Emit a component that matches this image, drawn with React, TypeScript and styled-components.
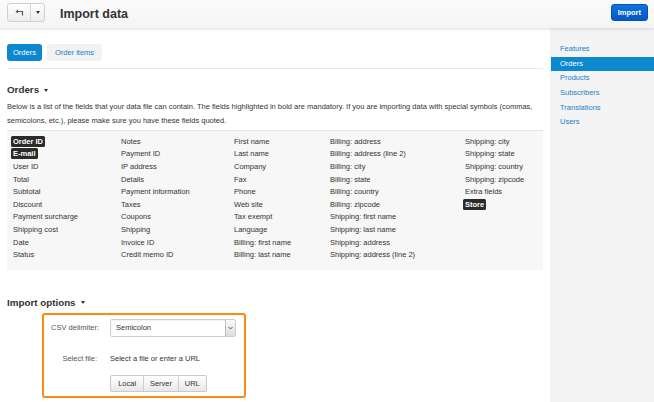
import React from "react";
import styled, { createGlobalStyle } from "styled-components";

const Global = createGlobalStyle`
  html, body { margin: 0; padding: 0; background: #fff; }
  body { font-family: "Liberation Sans", Arial, sans-serif; font-size: 7.5px; color: #333; }
  * { box-sizing: border-box; }
`;

const Page = styled.div`
  width: 654px;
  height: 402px;
  overflow: hidden;
  display: flex;
  flex-direction: column;
`;

const Header = styled.header`
  height: 28px;
  flex: none;
  display: flex;
  align-items: center;
  padding: 0 6px 0 7px;
  background: linear-gradient(#fbfbfb, #f4f4f4);
  box-shadow: 0 1px 3px rgba(0, 0, 0, 0.14);
  position: relative;
  z-index: 1;
`;

const BtnGroup = styled.div`
  display: flex;
  height: 19px;
  margin-top: -3px;
  border: 1px solid #cfcfcf;
  border-radius: 3px;
  background: linear-gradient(#ffffff, #ececec);
  overflow: hidden;
`;

const IconBtn = styled.div<{ $w: number }>`
  width: ${(p) => p.$w}px;
  display: flex;
  align-items: center;
  justify-content: center;
  & + & { border-left: 1px solid #d6d6d6; }
`;

const Title = styled.h1`
  margin: 0 0 0 15px;
  font-size: 12.5px;
  font-weight: bold;
  color: #333;
  flex: 1;
`;

const PrimaryBtn = styled.button`
  height: 17px;
  margin-top: -4px;
  padding: 0 6px;
  border: 1px solid #0a4fb8;
  border-radius: 3px;
  background: linear-gradient(#0d74dc, #0756c6);
  color: #fff;
  font-family: inherit;
  font-size: 7.5px;
  font-weight: bold;
`;

const Body = styled.div`
  flex: 1;
  display: flex;
  min-height: 0;
`;

const Main = styled.main`
  width: 550px;
  flex: none;
  padding: 0 7px;
`;

const Tabs = styled.div`
  display: flex;
  gap: 5px;
  margin-top: 16px;
  padding-bottom: 7px;
  border-bottom: 1px solid #e8e8e8;
`;

const Tab = styled.div<{ $active?: boolean }>`
  height: 17px;
  padding: 0 ${(p) => (p.$active ? 6 : 8)}px;
  display: flex;
  align-items: center;
  border-radius: 3px;
  background: ${(p) => (p.$active ? "#0b88d0" : "#f2f2f2")};
  color: ${(p) => (p.$active ? "#fff" : "#1a7fc8")};
`;

const SectionTitle = styled.h2<{ $mt: number }>`
  margin: ${(p) => p.$mt}px 0 0;
  font-size: 9.8px;
  line-height: 12px;
  font-weight: bold;
  color: #333;
  display: flex;
  align-items: center;
  gap: 5px;
`;

const Caret = styled.span`
  display: inline-block;
  width: 0;
  height: 0;
  border-left: 2.5px solid transparent;
  border-right: 2.5px solid transparent;
  border-top: 3px solid #333;
`;

const Desc = styled.p`
  margin: 4px 0 0;
  font-size: 7.5px;
  line-height: 14px;
  color: #333;
`;

const FieldGrid = styled.div`
  margin-top: 2px;
  border-top: 1px solid #e4e4e4;
  background: #f7f7f7;
  padding: 4px 0 9px 6px;
  display: grid;
  grid-auto-flow: column;
  grid-template-rows: repeat(10, 12.6px);
  grid-template-columns: 108px 113px 96px 135px auto;
`;

const Field = styled.div`
  display: flex;
  align-items: center;
  color: #333;
  white-space: nowrap;
`;

const Mandatory = styled.span`
  display: inline-block;
  margin-left: -2px;
  padding: 0 2px;
  line-height: 11px;
  border-radius: 1.5px;
  background: #2b2b2b;
  color: #fff;
  font-weight: bold;
`;

const OptionsBox = styled.div`
  margin: 4px 0 0 35px;
  width: 204px;
  height: 85px;
  border: 2px solid #ff8a0d;
  border-radius: 3px;
  padding-top: 4px;
  display: flex;
  flex-direction: column;
`;

const OptionRow = styled.div<{ $mt: number; $h: number }>`
  margin-top: ${(p) => p.$mt}px;
  height: ${(p) => p.$h}px;
  display: grid;
  grid-template-columns: 55px auto;
  column-gap: 11px;
  align-items: center;
`;

const Label = styled.div<{ $pr?: number }>`
  text-align: right;
  color: #555;
  padding-right: ${(p) => p.$pr || 0}px;
`;

const Select = styled.div`
  width: 126px;
  height: 18px;
  display: flex;
  border: 1px solid #cdcdcd;
  border-radius: 2px;
  background: #fff;
  box-shadow: inset 0 1px 2px rgba(0, 0, 0, 0.06);
`;

const SelectValue = styled.div`
  flex: 1;
  display: flex;
  align-items: center;
  padding-left: 5px;
  color: #333;
`;

const SelectArrow = styled.div`
  width: 10px;
  border-left: 1px solid #bdbdbd;
  background: linear-gradient(#f8f8f8, #dedede);
  display: flex;
  align-items: center;
  justify-content: center;
`;

const FileText = styled.div`
  color: #333;
`;

const ButtonRow = styled.div`
  display: flex;
  height: 17px;
  width: 97px;
  border: 1px solid #cacaca;
  border-radius: 2px;
  background: linear-gradient(#ffffff, #e8e8e8);
`;

const SmallBtn = styled.div<{ $w: number }>`
  width: ${(p) => p.$w}px;
  display: flex;
  align-items: center;
  justify-content: center;
  color: #333;
  & + & { border-left: 1px solid #cfcfcf; }
`;

const Sidebar = styled.aside`
  flex: 1;
  background: #f4f4f4;
  padding: 14px 0 0 1px;
`;

const NavItem = styled.div<{ $active?: boolean }>`
  height: 14.7px;
  line-height: 14.7px;
  padding-left: 9px;
  color: ${(p) => (p.$active ? "#fff" : "#1a7fc8")};
  background: ${(p) => (p.$active ? "#0b88d0" : "transparent")};
`;

type F = { t: string; b?: boolean };
const columns: F[][] = [
  [
    { t: "Order ID", b: true },
    { t: "E-mail", b: true },
    { t: "User ID" },
    { t: "Total" },
    { t: "Subtotal" },
    { t: "Discount" },
    { t: "Payment surcharge" },
    { t: "Shipping cost" },
    { t: "Date" },
    { t: "Status" },
  ],
  [
    { t: "Notes" },
    { t: "Payment ID" },
    { t: "IP address" },
    { t: "Details" },
    { t: "Payment information" },
    { t: "Taxes" },
    { t: "Coupons" },
    { t: "Shipping" },
    { t: "Invoice ID" },
    { t: "Credit memo ID" },
  ],
  [
    { t: "First name" },
    { t: "Last name" },
    { t: "Company" },
    { t: "Fax" },
    { t: "Phone" },
    { t: "Web site" },
    { t: "Tax exempt" },
    { t: "Language" },
    { t: "Billing: first name" },
    { t: "Billing: last name" },
  ],
  [
    { t: "Billing: address" },
    { t: "Billing: address (line 2)" },
    { t: "Billing: city" },
    { t: "Billing: state" },
    { t: "Billing: country" },
    { t: "Billing: zipcode" },
    { t: "Shipping: first name" },
    { t: "Shipping: last name" },
    { t: "Shipping: address" },
    { t: "Shipping: address (line 2)" },
  ],
  [
    { t: "Shipping: city" },
    { t: "Shipping: state" },
    { t: "Shipping: country" },
    { t: "Shipping: zipcode" },
    { t: "Extra fields" },
    { t: "Store", b: true },
  ],
];

const nav = ["Features", "Orders", "Products", "Subscribers", "Translations", "Users"];

export default function App() {
  return (
    <Page>
      <Global />
      <Header>
        <BtnGroup>
          <IconBtn $w={22}>
            <svg width="9" height="7" viewBox="0 0 9 7">
              <path d="M0.5 2.5 L3 0.5 L3 4.5 Z" fill="#555" />
              <path d="M2.5 2.5 H7.5 V6.5" stroke="#555" strokeWidth="1.2" fill="none" />
            </svg>
          </IconBtn>
          <IconBtn $w={14}>
            <Caret />
          </IconBtn>
        </BtnGroup>
        <Title>Import data</Title>
        <PrimaryBtn>Import</PrimaryBtn>
      </Header>
      <Body>
        <Main>
          <Tabs>
            <Tab $active>Orders</Tab>
            <Tab>Order items</Tab>
          </Tabs>
          <SectionTitle $mt={15}>
            Orders <Caret />
          </SectionTitle>
          <Desc>
            Below is a list of the fields that your data file can contain. The fields highlighted in bold are
            mandatory. If you are importing data with special symbols (commas, semicolons, etc.), please make
            sure you have these fields quoted.
          </Desc>
          <FieldGrid>
            {columns.flat().map((f, i) => (
              <Field key={i}>{f.b ? <Mandatory>{f.t}</Mandatory> : f.t}</Field>
            ))}
          </FieldGrid>
          <SectionTitle $mt={27}>
            Import options <Caret />
          </SectionTitle>
          <OptionsBox>
            <OptionRow $mt={0} $h={18}>
              <Label>CSV delimiter:</Label>
              <Select>
                <SelectValue>Semicolon</SelectValue>
                <SelectArrow>
                  <svg width="5" height="4" viewBox="0 0 5 4">
                    <path d="M0.5 1 L2.5 3 L4.5 1" stroke="#444" strokeWidth="0.9" fill="none" />
                  </svg>
                </SelectArrow>
              </Select>
            </OptionRow>
            <OptionRow $mt={17} $h={10}>
              <Label $pr={2}>Select file:</Label>
              <FileText>Select a file or enter a URL</FileText>
            </OptionRow>
            <OptionRow $mt={11} $h={17}>
              <div />
              <ButtonRow>
                <SmallBtn $w={33}>Local</SmallBtn>
                <SmallBtn $w={35}>Server</SmallBtn>
                <SmallBtn $w={29}>URL</SmallBtn>
              </ButtonRow>
            </OptionRow>
          </OptionsBox>
        </Main>
        <Sidebar>
          {nav.map((n) => (
            <NavItem key={n} $active={n === "Orders"}>
              {n}
            </NavItem>
          ))}
        </Sidebar>
      </Body>
    </Page>
  );
}
